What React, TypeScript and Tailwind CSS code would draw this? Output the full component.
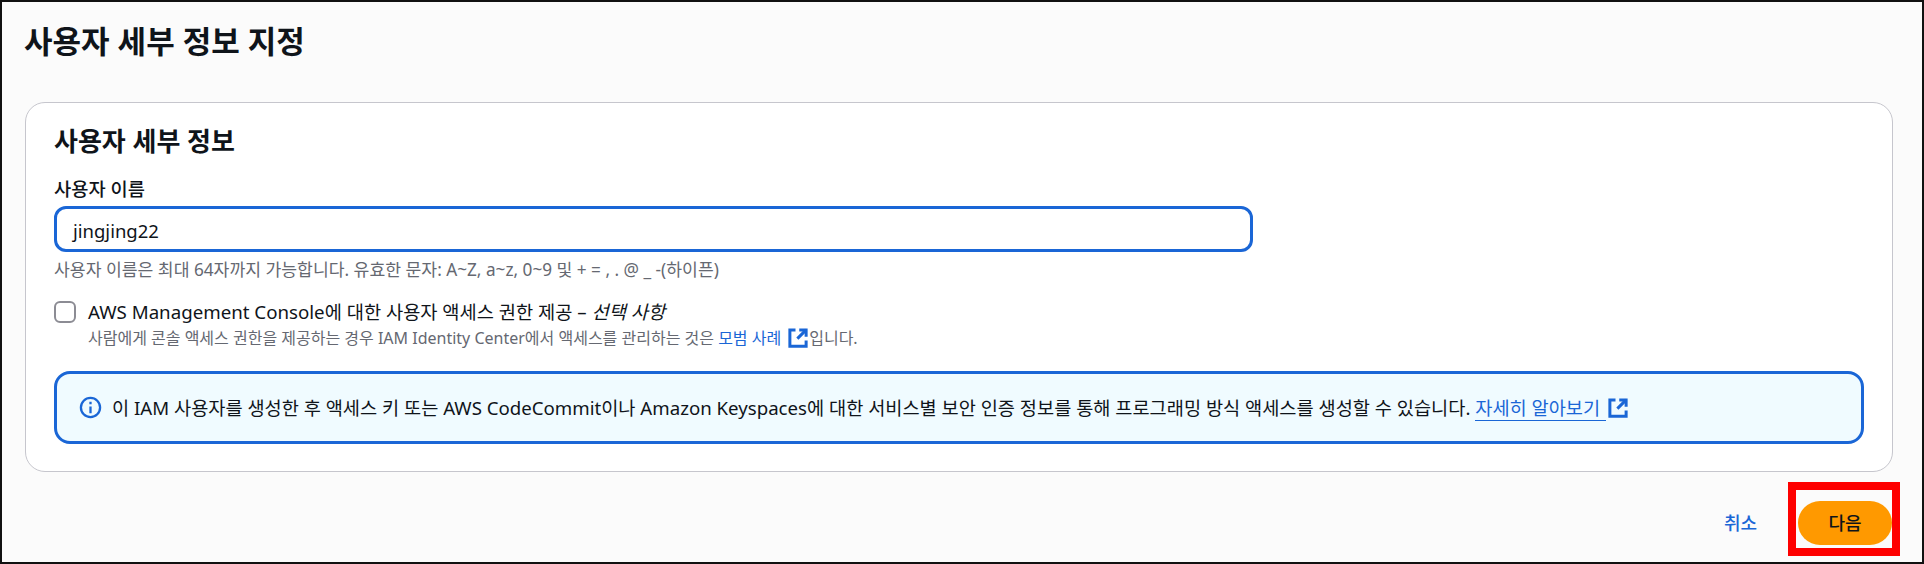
const fontStack = { fontFamily: '"Noto Sans", "Noto Sans CJK KR", sans-serif' };

const ExternalIcon = ({ className }: { className: string }) => (
  <svg viewBox="0 0 16 16" fill="none" stroke="#1a66d6" strokeWidth="2.4" className={className}>
    <path d="M6 1.5H1.5v13h13V10" />
    <path d="M9 1.5h5.5V7" />
    <path d="M14.5 1.5L7.5 8.5" />
  </svg>
);

export default function App() {
  return (
    <div className="relative flex h-[564px] w-[1924px] flex-col border-2 border-[#111111] bg-[#fbfbfb] text-[#0f141a]" style={fontStack}>
      <h1 className="mt-[21px] ml-[22px] text-[31px] leading-[36px] font-semibold">사용자 세부 정보 지정</h1>

      <section className="mt-[43px] ml-[23px] h-[370px] w-[1868px] rounded-[20px] border border-[#c6c6cd] bg-white pt-[22px] pl-[28px]">
        <h2 className="text-[26px] leading-[32px] font-semibold">사용자 세부 정보</h2>
        <label className="mt-[20px] block text-[18.7px] leading-[24px] font-medium">사용자 이름</label>
        <div className="mt-[5px] flex h-[46px] w-[1199px] items-center rounded-[12px] border-[3px] border-[#1a66d6] pt-[3px] pl-[16px] text-[18.5px]">jingjing22</div>
        <p className="mt-[8px] text-[17.2px] leading-[20px] text-[#656871]">
          사용자 이름은 최대 64자까지 가능합니다. 유효한 문자: A~Z, a~z, 0~9 및 + = , . @ _ -(하이픈)
        </p>

        <div className="mt-[20px] flex gap-[12px]">
          <div className="mt-[1px] h-[22px] w-[22px] rounded-[6px] border-2 border-[#8c8c94] bg-white" />
          <div>
            <p className="text-[18.7px] leading-[24px]">
              AWS Management Console에 대한 사용자 액세스 권한 제공 – <em>선택 사항</em>
            </p>
            <p className="mt-[4px] flex items-center text-[16px] leading-[20px] text-[#656871]">
              사람에게 콘솔 액세스 권한을 제공하는 경우 IAM Identity Center에서 액세스를 관리하는 것은&nbsp;
              <span className="text-[#1a66d6]">모범 사례</span>
              <ExternalIcon className="mr-[1px] ml-[7px] h-[20px] w-[20px]" />
              입니다.
            </p>
          </div>
        </div>

        <div className="mt-[23px] flex h-[73px] w-[1810px] items-center rounded-[16px] border-[3px] border-[#1a66d6] bg-[#f0fbff] pl-[22px] text-[18.65px]">
          <svg viewBox="0 0 24 24" fill="none" stroke="#1a66d6" strokeWidth="2.4" className="mr-[10px] h-[23px] w-[23px] shrink-0">
            <circle cx="12" cy="12" r="10" />
            <path d="M12 11v7M12 6v2.6" />
          </svg>
          <p>
            이 IAM 사용자를 생성한 후 액세스 키 또는 AWS CodeCommit이나 Amazon Keyspaces에 대한 서비스별 보안 인증 정보를 통해 프로그래밍 방식 액세스를 생성할 수 있습니다.{' '}
            <span className="border-b border-[#1a66d6] pr-[6px] text-[#1a66d6]">자세히 알아보기</span>
          </p>
          <ExternalIcon className="ml-[2px] h-[20px] w-[20px]" />
        </div>
      </section>

      <div className="mt-[29px] flex items-center justify-end pr-[30px]">
        <span className="mr-[41px] text-[18px] font-medium text-[#1a66d6]">취소</span>
        <button className="h-[44px] w-[94px] rounded-full bg-[#ff9900] text-[18px] font-medium text-[#0f141a]">다음</button>
      </div>

      {/* red annotation around the next button */}
      <div className="absolute top-[480px] left-[1786px] h-[74px] w-[112px] border-[8px] border-[#fe0000]" />
    </div>
  );
}
